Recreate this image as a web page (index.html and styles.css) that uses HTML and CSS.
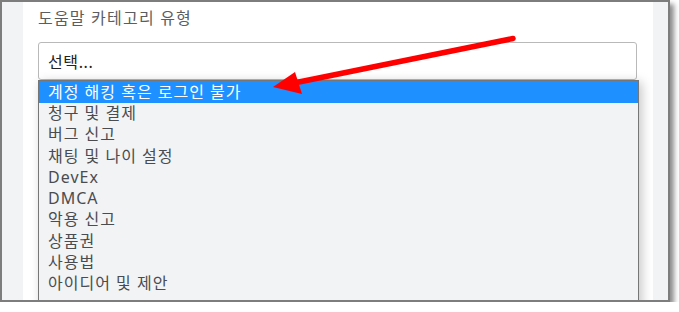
FILE: index.html
```html
<!DOCTYPE html>
<html lang="ko">
<head>
  <meta charset="UTF-8" />
  <meta name="viewport" content="width=device-width, initial-scale=1.0"/>
  <title>도움말 카테고리 유형</title>
  <link rel="stylesheet" href="styles.css">
</head>
<body>
  <div class="shot">
    <div class="panel">
      <label class="field-label">도움말 카테고리 유형</label>
      <div class="select">선택...</div>
      <ul class="options">
        <li class="active">계정 해킹 혹은 로그인 불가</li>
        <li>청구 및 결제</li>
        <li>버그 신고</li>
        <li>채팅 및 나이 설정</li>
        <li>DevEx</li>
        <li>DMCA</li>
        <li>악용 신고</li>
        <li>상품권</li>
        <li>사용법</li>
        <li>아이디어 및 제안</li>
      </ul>
    </div>

    <!-- annotation arrow -->
    <svg class="arrow" width="679" height="312" viewBox="0 0 679 312">
      <line x1="513" y1="38.5" x2="294" y2="83" stroke="#ff0000" stroke-width="5.5" stroke-linecap="round"/>
      <polygon points="273,87 295,72 302,94" fill="#ff0000"/>
    </svg>
  </div>
</body>
</html>
```

FILE: styles.css
```css
* {
  box-sizing: border-box;
}

body {
  margin: 0;
  background: #fff;
  font-family: "Noto Sans", "Noto Sans CJK KR", sans-serif;
}

.shot {
  position: relative;
  width: 670px;
  height: 302px;
  border: 2px solid #7d7d7d;
  background: #f2f3f5;
  padding: 0 15px 0 21px;
  overflow: hidden;
  box-shadow: 4px 4px 5px rgba(0, 0, 0, 0.45);
}

.panel {
  background: #fff;
  height: 100%;
  padding: 6px 0 0 15px;
}

.field-label {
  display: block;
  font-size: 16px;
  line-height: 20px;
  letter-spacing: 1.2px;
  color: #5b5d60;
  margin-bottom: 14px;
}

.select {
  display: flex;
  align-items: center;
  width: 599px;
  height: 38px;
  padding-left: 9px;
  border: 1px solid #b9b9b9;
  border-radius: 3px;
  font-size: 16px;
  letter-spacing: 0.6px;
  color: #222;
  background: #fff;
}

.options {
  list-style: none;
  margin: 0;
  padding: 0;
  width: 601px;
  height: 240px;
  background: #f2f3f5;
  border: 1px solid #767676;
  border-bottom: none;
  box-shadow: 3px 2px 10px rgba(0, 0, 0, 0.22);
}

.options li {
  font-size: 16px;
  line-height: 21.3px;
  letter-spacing: 1px;
  padding-left: 9px;
  color: #4a4c4f;
  white-space: nowrap;
}

.options li.active {
  background: #1e90ff;
  color: #fff;
  line-height: 22px;
}

.arrow {
  position: absolute;
  left: -2px;
  top: -2px;
  pointer-events: none;
}
```
